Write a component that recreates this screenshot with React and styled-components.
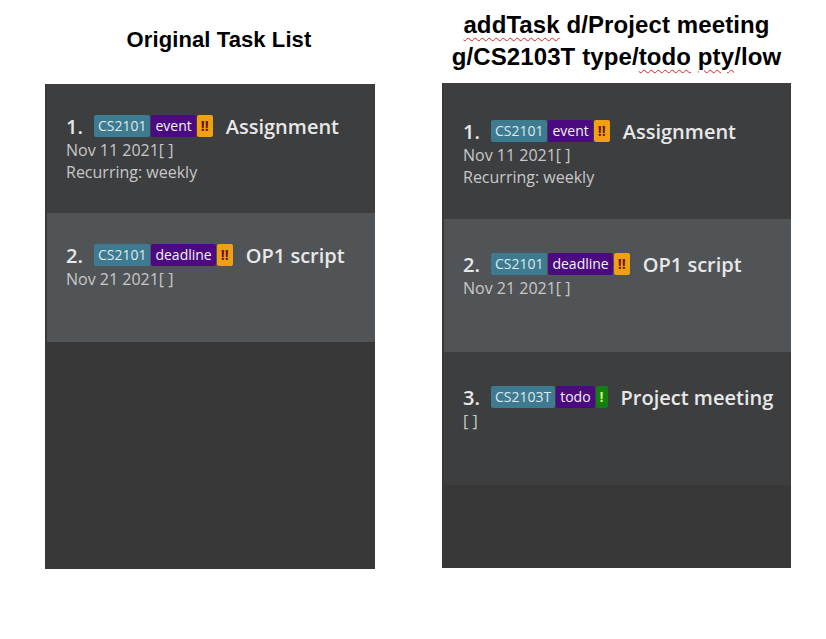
import React from 'react';
import styled, { createGlobalStyle } from 'styled-components';

const GlobalStyle = createGlobalStyle`
  html, body {
    margin: 0;
    padding: 0;
    background: #fff;
  }
  body {
    width: 826px;
    height: 639px;
    overflow: hidden;
  }
`;

const originalTasks = [
    { no: 1, module: 'CS2101', type: 'event', pty: '!!', level: 'high', title: 'Assignment', lines: ['Nov 11 2021[ ]', 'Recurring: weekly'] },
    { no: 2, module: 'CS2101', type: 'deadline', pty: '!!', level: 'high', title: 'OP1 script', lines: ['Nov 21 2021[ ]'] },
];

const newTasks = [
    ...originalTasks,
    { no: 3, module: 'CS2103T', type: 'todo', pty: '!', level: 'low', title: 'Project meeting', lines: ['[ ]'] },
];

const TaskCard = ({ task, alt, height, top }) => (
    <Card alt={alt} style={{ height, paddingTop: top }}>
        <TitleRow>
            <Index>{task.no}.</Index>
            <Tags>
                <Tag kind="module">{task.module}</Tag>
                <Tag kind="type">{task.type}</Tag>
                <Tag kind={task.level}>{task.pty}</Tag>
            </Tags>
            <Title>{task.title}</Title>
        </TitleRow>
        {task.lines.map((line) => (
            <Detail key={line}>{line}</Detail>
        ))}
    </Card>
);

const App = () => {
    const rightHeights = [136, 133, 133];
    const rightTops = [35, 32, 32];

    return (
        <Page>
            <GlobalStyle />
            <Column>
                <Heading shift={18}>
                    <HeadText size={22}>Original Task List</HeadText>
                </Heading>
                <Panel width={330}>
                    {originalTasks.map((task, i) => (
                        <TaskCard key={task.no} task={task} alt={i % 2 === 1} height={129} top={29} />
                    ))}
                </Panel>
            </Column>
            <Column>
                <Heading shift={0} compact>
                    <HeadText size={24}>
                        <Misspelled>addTask</Misspelled> d/Project meeting
                        <br />
                        g/CS2103T type/<Misspelled>todo</Misspelled> <Misspelled>pty</Misspelled>/low
                    </HeadText>
                </Heading>
                <Panel width={349}>
                    {newTasks.map((task, i) => (
                        <TaskCard
                            key={task.no}
                            task={task}
                            alt={i % 2 === 1}
                            height={rightHeights[i]}
                            top={rightTops[i]}
                        />
                    ))}
                </Panel>
            </Column>
        </Page>
    );
};

const Page = styled.div`
  display: flex;
  align-items: flex-start;
  gap: 67px;
  padding-left: 45px;
`;

const Column = styled.div`
  display: flex;
  flex-direction: column;
`;

const Heading = styled.div`
  height: ${(p) => (p.compact ? 83 : 84)}px;
  box-sizing: border-box;
  padding-top: ${(p) => (p.compact ? 9 : 27)}px;
  padding-left: ${(p) => p.shift}px;
  text-align: center;
`;

const HeadText = styled.div`
  font-family: "Liberation Sans", Arial, sans-serif;
  font-weight: 700;
  font-size: ${(p) => p.size}px;
  line-height: ${(p) => (p.size > 22 ? 32 : 26)}px;
  letter-spacing: 0.1px;
  color: #000;
`;

const Misspelled = styled.span`
  text-decoration: underline wavy #e02020;
  text-decoration-thickness: 1px;
  text-underline-offset: 4px;
`;

const Panel = styled.div`
  width: ${(p) => p.width}px;
  height: 485px;
  box-sizing: border-box;
  padding-left: 2px;
  background: #383838;
  display: flex;
  flex-direction: column;
`;

const Card = styled.div`
  box-sizing: border-box;
  padding-left: 19px;
  background: ${(p) => (p.alt ? '#505457' : '#3c3e40')};
  font-family: "Open Sans", "Noto Sans", sans-serif;
`;

const TitleRow = styled.div`
  display: flex;
  align-items: center;
  height: 26px;
`;

const Index = styled.span`
  font-size: 20px;
  font-weight: 600;
  color: #e8e8e8;
  margin-right: 11px;
`;

const Tags = styled.div`
  display: flex;
  gap: 1px;
  margin-right: 13px;
`;

const tagColors = {
    module: { bg: '#3e7a90', fg: '#dde9ee' },
    type: { bg: '#4b0a80', fg: '#f2f2f2' },
    high: { bg: '#f0a010', fg: '#6a1208' },
    low: { bg: '#118011', fg: '#d8f060' },
};

const Tag = styled.span`
  height: 22px;
  line-height: 22px;
  padding: 0 4px;
  border-radius: 2px;
  font-size: 14px;
  font-weight: ${(p) => (p.kind === 'high' || p.kind === 'low' ? 700 : 400)};
  background: ${(p) => tagColors[p.kind].bg};
  color: ${(p) => tagColors[p.kind].fg};
`;

const Title = styled.span`
  font-size: 20px;
  font-weight: 600;
  color: #e8e8e8;
  white-space: nowrap;
`;

const Detail = styled.div`
  font-size: 16px;
  line-height: 22px;
  color: #c8c8c8;
`;

export default App;
